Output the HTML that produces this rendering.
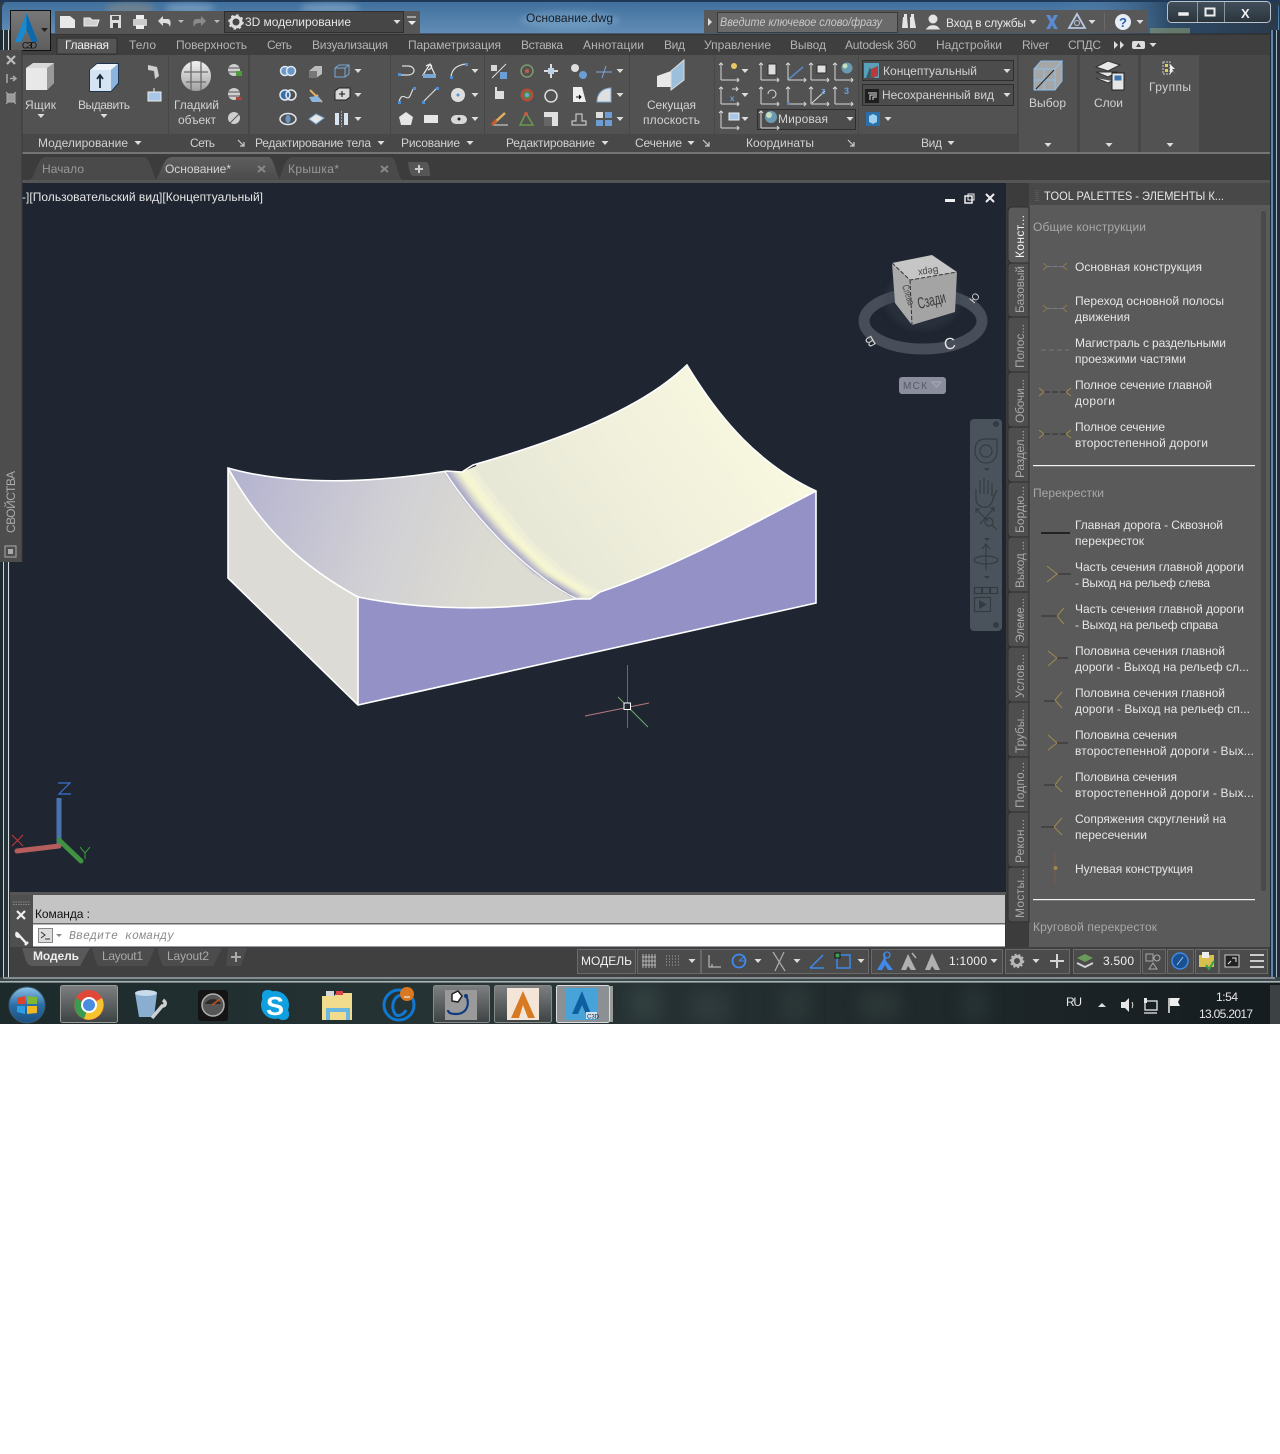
<!DOCTYPE html>
<html lang="ru"><head><meta charset="utf-8"><title>Основание.dwg</title>
<style>
html,body{margin:0;padding:0;background:#fff}
svg{display:block;position:absolute;left:0;top:0}
text{font-family:"Liberation Sans","DejaVu Sans",sans-serif;font-size:12px;fill:#ddd}
.t{fill:#d2d2d2}.w{fill:#f0f0f0}.d{fill:#b4b4b4}.g{fill:#a8a8a8}.l{fill:#e6e6e6}.k{fill:#111}
.s{fill:none;stroke:#ddd;stroke-width:1.2}
</style></head><body>
<svg width="1280" height="1454" viewBox="0 0 1280 1454" xmlns="http://www.w3.org/2000/svg">
<defs>
<linearGradient id="tb" x1="0" y1="0" x2="0" y2="1"><stop offset="0" stop-color="#3f6f9d"/><stop offset="1" stop-color="#6590b8"/></linearGradient>
<linearGradient id="tr" x1="0" y1="0" x2="1" y2="0"><stop offset="0" stop-color="#6590b8" stop-opacity="0"/><stop offset=".5" stop-color="#2c4a68"/><stop offset="1" stop-color="#2b3a4a"/></linearGradient>
<linearGradient id="app" x1="0" y1="0" x2="0" y2="1"><stop offset="0" stop-color="#787878"/><stop offset="1" stop-color="#5e5e5e"/></linearGradient>
<linearGradient id="lf" gradientUnits="userSpaceOnUse" x1="240" y1="470" x2="500" y2="560"><stop offset="0" stop-color="#b5b4d0"/><stop offset=".55" stop-color="#d0cfd4"/><stop offset="1" stop-color="#dddcd2"/></linearGradient>
<linearGradient id="rt" gradientUnits="userSpaceOnUse" x1="520" y1="560" x2="740" y2="400"><stop offset="0" stop-color="#e6e6d6"/><stop offset="1" stop-color="#f8f8e0"/></linearGradient>
<linearGradient id="ball" x1="0" y1="0" x2="0" y2="1"><stop offset="0" stop-color="#f2f2f2"/><stop offset="1" stop-color="#a0a0a0"/></linearGradient>
<linearGradient id="orb" x1="0" y1="0" x2="0" y2="1"><stop offset="0" stop-color="#8fc4e8"/><stop offset=".5" stop-color="#2a6ea8"/><stop offset="1" stop-color="#1c4f80"/></linearGradient>
<linearGradient id="bar" x1="0" y1="0" x2="1" y2="0"><stop offset="0" stop-color="#1d2a2c"/><stop offset=".4" stop-color="#283536"/><stop offset=".7" stop-color="#20292b"/><stop offset="1" stop-color="#151c20"/></linearGradient>
<linearGradient id="btn" x1="0" y1="0" x2="0" y2="1"><stop offset="0" stop-color="#7d8080"/><stop offset="1" stop-color="#3d4243"/></linearGradient>
<linearGradient id="tabg" x1="0" y1="0" x2="0" y2="1"><stop offset="0" stop-color="#5e5e5e"/><stop offset="1" stop-color="#4b4b4b"/></linearGradient>
<linearGradient id="wb" x1="0" y1="0" x2="0" y2="1"><stop offset="0" stop-color="#42505c"/><stop offset="1" stop-color="#2a343c"/></linearGradient>
<filter id="b3"><feGaussianBlur stdDeviation="3"/></filter>
<filter id="b8"><feGaussianBlur stdDeviation="8"/></filter>
<filter id="b1" x="-5%" y="-5%" width="110%" height="110%"><feGaussianBlur stdDeviation="1"/></filter>
<clipPath id="tbclip"><rect y="983" width="1280" height="41"/></clipPath>
<g id="ar"><path d="M-3.5-2H3.500L0 2Z" fill="#ddd"/></g>
<g id="ucs" fill="none" stroke="#d8d8d8" stroke-width="1"><path d="M-9 9V-8M-9 9H9M-11-6-9-8-7-6M7 7 9 9 7 11"/></g>
<g id="cor"><path d="M-3-3 3 3M3-1V3H-1" fill="none" stroke="#ccc" stroke-width="1.200"/></g>
<g id="rd"><path d="M-16-4-11 0-16 4" fill="none" stroke="#a08a4a"/><path d="M16-4 11 0 16 4" fill="none" stroke="#a08a4a"/><path d="M-11 0H11" stroke="#3a3a3a" stroke-width="1.200" stroke-dasharray="6 2"/></g>
</defs>

<!-- base -->
<rect width="1280" height="1024" fill="#2d3a44"/>
<rect y="1024" width="1280" height="430" fill="#fff"/>
<!-- titlebar -->
<rect x="2" y="1" width="1277" height="36" rx="7" fill="url(#tb)"/>
<rect y="0" width="1280" height="2" fill="#1f3a58"/>
<rect x="1060" y="2" width="218" height="32" fill="url(#tr)"/>
<rect x="1150" y="28" width="40" height="6" fill="#8a9a70" opacity=".6"/>
<g filter="url(#b3)" opacity=".3"><ellipse cx="130" cy="8" rx="25" ry="5" fill="#d0a060"/><ellipse cx="190" cy="8" rx="25" ry="5" fill="#cfe2f0"/><ellipse cx="330" cy="8" rx="30" ry="5" fill="#cfe2f0"/><ellipse cx="570" cy="20" rx="50" ry="9" fill="#9fc4e0"/></g>
<text x="526" y="22" class="k" textLength="87" lengthAdjust="spacingAndGlyphs" style="fill:#16202a">Основание.dwg</text>

<!-- search bar -->
<rect x="704" y="10" width="444" height="23" fill="#585858"/>
<path d="M708 18 712 22 708 26Z" fill="#ddd"/>
<rect x="717.500" y="12.500" width="180" height="20" fill="#6a6a6a" stroke="#3a3a3a"/>
<text x="720" y="26" style="font-style:italic;font-size:11.500px;fill:#c8c8c8" textLength="162" lengthAdjust="spacingAndGlyphs">Введите ключевое слово/фразу</text>
<path d="M903 17H907L908 28H902ZM910 17H914L916 28H910Z" fill="#e4e4e4"/><rect x="904" y="14" width="3" height="3" fill="#e4e4e4"/><rect x="911" y="14" width="3" height="3" fill="#e4e4e4"/>
<circle cx="933" cy="19" r="4.500" fill="#e4e4e4"/><path d="M927 29C927 24 939 24 939 29Z" fill="#e4e4e4"/><path d="M926 29H940" stroke="#ddd"/>
<text x="946" y="27" class="l" textLength="80">Вход в службы</text><use href="#ar" x="1033" y="22"/>
<path d="M1046 15H1050L1052 19 1054 15H1058L1054 22 1058 29H1054L1052 25 1050 29H1046L1050 22Z" fill="#5a8ad0"/>
<path d="M1077 14 1085 28H1069Z" fill="none" stroke="#b8c8e0" stroke-width="1.800"/><circle cx="1077" cy="23" r="2.500" fill="none" stroke="#b8c8e0"/>
<use href="#ar" x="1092" y="22"/>
<path d="M1104.500 13V31" stroke="#6a6a6a"/>
<circle cx="1123" cy="22" r="8" fill="#e8eef6"/><text x="1119" y="27" style="font-size:13px;font-weight:bold;fill:#2a62b0">?</text>
<use href="#ar" x="1140" y="22"/>

<!-- window buttons -->
<rect x="1167.500" y="1.500" width="103" height="21" rx="4" fill="url(#wb)" stroke="#b8c2c8"/>
<path d="M1197.500 2V22M1224.500 2V22" stroke="#8a969e"/>
<rect x="1178" y="12" width="11" height="4" fill="#eee" stroke="#333" stroke-width=".5"/>
<rect x="1205.500" y="8.500" width="9" height="7" fill="none" stroke="#eee" stroke-width="2"/>
<text x="1241" y="18" style="font-size:13px;font-weight:bold;fill:#f0f0f0">X</text>

<!-- window frame -->
<rect x="0" y="30" width="3" height="955" fill="#1e2a30"/>
<rect x="3" y="30" width="7" height="950" fill="#27333a"/>
<rect x="3" y="30" width="1" height="950" fill="#c9d2d8"/>
<rect x="8" y="30" width="1" height="950" fill="#d8dde0"/>
<rect x="1270" y="30" width="10" height="950" fill="#202c38"/>
<rect x="1271" y="30" width="2" height="950" fill="#5a86b0"/>
<rect x="1276" y="30" width="1" height="950" fill="#aab8c4"/>
<rect x="0" y="977" width="1280" height="6" fill="#3b4748"/>
<rect x="3" y="977.500" width="1272" height="1" fill="#c8d0d4"/>
<rect x="0" y="981" width="1280" height="1.500" fill="#aab4b6"/>

<!-- tab row -->
<rect x="10" y="34" width="1260" height="21" fill="#3f3f3f"/>
<rect x="10" y="33.500" width="1260" height="1" fill="#2a2a2a"/>
<path d="M57 54V38H117V54Z" fill="#545454" stroke="#2e2e2e"/>
<g class="tabs">
<text x="65" y="49" class="w" textLength="44">Главная</text>
<text x="129" y="49" class="d" textLength="27">Тело</text>
<text x="176" y="49" class="d" textLength="71">Поверхность</text>
<text x="267" y="49" class="d" textLength="25">Сеть</text>
<text x="312" y="49" class="d" textLength="76">Визуализация</text>
<text x="408" y="49" class="d" textLength="93">Параметризация</text>
<text x="521" y="49" class="d" textLength="42">Вставка</text>
<text x="583" y="49" class="d" textLength="61">Аннотации</text>
<text x="664" y="49" class="d" textLength="21">Вид</text>
<text x="704" y="49" class="d" textLength="67">Управление</text>
<text x="790" y="49" class="d" textLength="36">Вывод</text>
<text x="845" y="49" class="d" textLength="71">Autodesk 360</text>
<text x="936" y="49" class="d" textLength="66">Надстройки</text>
<text x="1022" y="49" class="d" textLength="27">River</text>
<text x="1068" y="49" class="d" textLength="33">СПДС</text>
</g>
<path d="M1114 41 1118 45 1114 49ZM1120 41 1124 45 1120 49Z" fill="#ddd"/>
<rect x="1132" y="41" width="13" height="8" rx="2" fill="#ddd"/><path d="M1136 47 1138.500 43 1141 47Z" fill="#444"/>
<use href="#ar" x="1153" y="45"/>

<!-- ribbon -->
<rect x="10" y="55" width="1260" height="98" fill="#474747"/>
<g fill="#525252">
<rect x="22" y="55" width="146" height="97"/><rect x="169" y="55" width="79" height="97"/><rect x="250" y="55" width="140" height="97"/><rect x="391" y="55" width="93" height="97"/><rect x="485" y="55" width="144" height="97"/><rect x="630" y="55" width="84" height="97"/><rect x="715" y="55" width="143" height="97"/><rect x="859" y="55" width="158" height="97"/><rect x="1019" y="55" width="58" height="97"/><rect x="1080" y="55" width="58" height="97"/><rect x="1141" y="55" width="58" height="97"/>
</g>
<g fill="#484848"><rect x="22" y="134" width="146" height="18"/><rect x="169" y="134" width="79" height="18"/><rect x="250" y="134" width="140" height="18"/><rect x="391" y="134" width="93" height="18"/><rect x="485" y="134" width="144" height="18"/><rect x="630" y="134" width="84" height="18"/><rect x="715" y="134" width="143" height="18"/><rect x="859" y="134" width="158" height="18"/></g>
<rect x="10" y="152" width="1260" height="2" fill="#757575"/>

<!-- ribbon text -->
<text x="25" y="109" class="t" textLength="31">Ящик</text>
<text x="78" y="109" class="t" textLength="52">Выдавить</text>
<text x="174" y="109" class="t" textLength="45">Гладкий</text>
<text x="178" y="124" class="t" textLength="38">объект</text>
<text x="647" y="109" class="t" textLength="49">Секущая</text>
<text x="643" y="124" class="t" textLength="57">плоскость</text>
<text x="1029" y="107" class="t" textLength="37">Выбор</text>
<text x="1094" y="107" class="t" textLength="29">Слои</text>
<text x="1149" y="91" class="t" textLength="42">Группы</text>
<text x="38" y="147" class="t" textLength="90">Моделирование</text>
<text x="190" y="147" class="t" textLength="25">Сеть</text>
<text x="255" y="147" class="t" textLength="116">Редактирование тела</text>
<text x="401" y="147" class="t" textLength="59">Рисование</text>
<text x="506" y="147" class="t" textLength="89">Редактирование</text>
<text x="635" y="147" class="t" textLength="47">Сечение</text>
<text x="746" y="147" class="t" textLength="68">Координаты</text>
<text x="921" y="147" class="t" textLength="21">Вид</text>
<use href="#ar" x="138" y="143"/><use href="#ar" x="381" y="143"/><use href="#ar" x="470" y="143"/><use href="#ar" x="605" y="143"/><use href="#ar" x="691" y="143"/><use href="#ar" x="951" y="143"/>
<use href="#cor" x="241" y="143"/><use href="#cor" x="706" y="143"/><use href="#cor" x="851" y="143"/>
<g><use href="#ar" x="41" y="116"/><use href="#ar" x="104" y="116"/><use href="#ar" x="1048" y="145"/><use href="#ar" x="1109" y="145"/><use href="#ar" x="1170" y="145"/></g>

<!-- ribbon big icons -->
<path d="M26 68 33 63H54V83L47 90H26Z" fill="#d8d8d8"/><path d="M26 68H47V90H26Z" fill="#e8e8e8"/><path d="M47 68 54 63V83L47 90Z" fill="#9a9a9a"/>
<path d="M89 70 97 63H119V84L111 92H89Z" fill="#1d3550"/><path d="M90 70H111V91H90Z" fill="#d5e4f2"/><path d="M111 70 118 64V83L111 91Z" fill="#8cb4dc"/><path d="M90 70 97 64H118L111 70Z" fill="#eef4fa"/><path d="M100 88V76M97 79 100 75 103 79" stroke="#1a2a3a" stroke-width="1.800" fill="none"/>
<path d="M148 65 157 67 159 76 155 79 154 71 148 70Z" fill="#cfcfcf"/>
<path d="M148 92V101H161V92ZM154 92 148 92M154 88V92" fill="#a8c6e6" stroke="#eee"/>
<circle cx="196" cy="76" r="15" fill="url(#ball)"/><path d="M184 72H208M186 82H206M191 62V90M201 62V90" stroke="#6a6a6a" stroke-width="1.300" fill="none"/>
<g fill="#cfcfcf"><circle cx="234" cy="70" r="6"/><circle cx="234" cy="94" r="6"/><circle cx="234" cy="118" r="6"/></g>
<path d="M228 68H240M228 72H240M228 92H240M228 96H240M229 124 240 113" stroke="#555"/><rect x="236" y="71" width="6" height="5" fill="#4c9a3c"/><rect x="236" y="97" width="6" height="3" fill="#a8443c"/>
<!-- section -->
<path d="M657 76 671 71 671 87 657 87Z" fill="#e8e8e8"/><path d="M671 71 684 60V80L671 90Z" fill="#9cc0dc" stroke="#ddd"/>
<!-- Select / layers / groups -->
<path d="M1034 69 1041 61H1062V81L1055 90H1034Z" fill="#bcbcbc" opacity=".8"/><path d="M1034 69H1055V90H1034ZM1055 69 1062 61V81L1055 90M1034 69 1041 61H1062M1034 80H1055M1044 69V90" fill="none" stroke="#8fc0ec"/><path d="M1036 89 1054 70" stroke="#222"/>
<path d="M1096 67 1108 61 1120 65 1108 71ZM1096 72 1108 77 1118 72ZM1096 78 1108 83 1112 81" fill="#e8e8e8" stroke="#333"/><rect x="1112" y="73" width="12" height="17" fill="#e6e6e6" stroke="#222"/><rect x="1114.500" y="75.500" width="7" height="5" fill="#3c74b0"/>
<rect x="1163" y="62" width="7" height="12" fill="none" stroke="#ccc" stroke-dasharray="2 1"/><rect x="1165" y="64" width="3" height="3" fill="#d8d060"/><rect x="1165" y="69" width="3" height="3" fill="#d8d060"/><path d="M1170 64V74L1173 71 1176 75 1172 69H1175Z" fill="#eee"/>

<!-- Small icons: solid edit -->
<g>
<g fill="none" stroke="#dfe8f2" stroke-width="1.500"><circle cx="285" cy="71" r="4.500" fill="#6a96c8"/><circle cx="291" cy="71" r="4.500" fill="#6a96c8"/><circle cx="285" cy="95" r="5" fill="#3a6ea8"/><circle cx="291" cy="95" r="5"/><ellipse cx="288" cy="119" rx="8" ry="5.500"/></g><ellipse cx="288" cy="119" rx="2.500" ry="4" fill="#6a96c8"/>
<path d="M309 71 315 66H322V74L316 78H309Z" fill="#bcbcbc"/><rect x="309" y="71" width="8" height="7" fill="#777"/>
<path d="M310 90 322 102M311 100 318 95" stroke="#e0b060" stroke-width="2"/><path d="M309 97 318 96 322 102H312Z" fill="#8cb4dc"/>
<path d="M309 119 316 114 324 118 316 124Z" fill="#e8e8e8" stroke="#7aa8d4"/>
<path d="M335 68 339 65H349V74L345 77H335ZM335 68H345V77M345 68 349 65" fill="none" stroke="#7aa8d4"/>
<path d="M335 91 339 88H350V97L346 100H335Z" fill="#d8d8d8" stroke="#222"/><path d="M339 94H345M342 91V97" stroke="#111"/>
<path d="M335 113H339V125H335ZM344 113H348V125H344Z" fill="#d8e4f0"/><path d="M341.500 111V127" stroke="#7aa8d4" stroke-dasharray="2 1"/>
<use href="#ar" x="358" y="71"/><use href="#ar" x="358" y="95"/><use href="#ar" x="358" y="119"/>
</g>
<!-- Draw -->
<g fill="none" stroke="#dcdcdc" stroke-width="1.200">
<path d="M399 75H408C416 75 416 66 408 66H402"/><path d="M423 75 430 64 435 75ZM426 66C432 62 434 68 428 70" stroke="#eee"/>
<path d="M451 77C452 68 458 65 466 64"/><path d="M399 102C402 90 407 102 410 96 412 92 412 90 414 88"/><path d="M423 102 437 88"/>
</g>
<path d="M423 74H436V78H423Z" fill="#7aa8d4"/>
<g fill="#4f8fd8"><rect x="398" y="73" width="3" height="3"/><rect x="450" y="76" width="3" height="3"/><rect x="465" y="63" width="3" height="3"/><rect x="398" y="101" width="3" height="3"/><rect x="413" y="87" width="3" height="3"/><rect x="422" y="101" width="3" height="3"/><rect x="436" y="87" width="3" height="3"/></g>
<circle cx="458" cy="95" r="7" fill="#dedede"/><circle cx="458" cy="95" r="1.500" fill="#4f8fd8"/>
<path d="M406 112 413 117 411 125H401L399 117Z" fill="#e6e6e6"/>
<rect x="424" y="115" width="14" height="8" fill="#e6e6e6"/><rect x="451" y="115" width="16" height="9" rx="5" fill="#d8d8d8"/><circle cx="459" cy="119" r="1.500" fill="#222"/>
<use href="#ar" x="475" y="71"/><use href="#ar" x="475" y="95"/><use href="#ar" x="475" y="119"/>
<!-- Edit -->
<g>
<path d="M492 78 506 64" stroke="#ddd"/><rect x="491" y="65" width="6" height="6" fill="#d8d8d8"/><rect x="500" y="72" width="7" height="7" fill="#6a9ed4"/>
<circle cx="527" cy="71" r="6" fill="none" stroke="#7f9a6a" stroke-width="1.500"/><circle cx="527" cy="71" r="2" fill="#c45a4a"/>
<path d="M551 64V78M544 71H558" stroke="#ddd" stroke-width="2"/><rect x="548" y="68" width="6" height="6" fill="#bcd2e8"/>
<circle cx="575" cy="68" r="4" fill="#dedede"/><circle cx="583" cy="75" r="4" fill="#6a9ed4"/>
<path d="M596 72H612M606 66 602 78" stroke="#7aa8d4"/><use href="#ar" x="620" y="71"/>
<rect x="495" y="91" width="9" height="8" fill="#dedede"/><path d="M496 91V87" stroke="#ddd" stroke-width="2"/>
<circle cx="527" cy="95" r="6.500" fill="#b84a3a"/><circle cx="527" cy="95" r="4" fill="#4a8a50"/><circle cx="527" cy="95" r="2" fill="#7aa8d4"/>
<circle cx="551" cy="96" r="6" fill="none" stroke="#ddd" stroke-width="1.500"/>
<path d="M573 87H582L586 102H573Z" fill="#eee"/><path d="M576 97H581M579 95 581 97 579 99" stroke="#111"/>
<path d="M597 102C597 93 603 88 611 88V102Z" fill="#e0e0e0" stroke="#7aa8d4"/><use href="#ar" x="620" y="95"/>
<path d="M492 125H508" stroke="#ddd"/><path d="M493 124 505 113" stroke="#e0b060" stroke-width="2.500"/><path d="M492 125 496 120" stroke="#c45a2a" stroke-width="3"/>
<path d="M526 113 520 125H533Z" fill="none" stroke="#6a9a4a" stroke-width="1.500"/><circle cx="526" cy="114" r="2" fill="#c45a4a"/>
<rect x="544" y="112" width="14" height="14" fill="#e0e0e0"/><rect x="544" y="117" width="8" height="9" fill="#666"/>
<path d="M572 125H586V121H582V114H576V121H572Z" fill="none" stroke="#ddd"/>
<g fill="#6a9ed4"><rect x="596" y="112" width="7" height="6" fill="#dedede"/><rect x="605" y="112" width="7" height="6"/><rect x="596" y="120" width="7" height="6"/><rect x="605" y="120" width="7" height="6"/></g><use href="#ar" x="620" y="119"/>
</g>
<!-- Coordinates -->
<use href="#ucs" x="730" y="71"/><circle cx="734" cy="66" r="3" fill="#e8c860"/>
<use href="#ucs" x="730" y="95"/><path d="M732 89H737M736 87 738 89 736 91" stroke="#ddd" fill="none"/><text x="730" y="101" style="font-size:8px;fill:#6aa0e0;font-weight:bold">x</text>
<use href="#ucs" x="730" y="119"/><rect x="729" y="113" width="10" height="7" fill="#a8c6e6" stroke="#eee"/>
<use href="#ar" x="745" y="71"/><use href="#ar" x="745" y="95"/><use href="#ar" x="745" y="119"/>
<use href="#ucs" x="770" y="71"/><rect x="768" y="64" width="8" height="11" fill="#ddd" stroke="#333"/>
<use href="#ucs" x="770" y="95"/><path d="M768 94A4 4 0 1 1 772 98" fill="none" stroke="#ddd"/>
<use href="#ucs" x="797" y="71"/><path d="M789 79 803 67" stroke="#5a88c0" stroke-width="1.500"/>
<use href="#ucs" x="797" y="95"/><rect x="787" y="102" width="3" height="3" fill="#5a88c0"/>
<use href="#ucs" x="820" y="71"/><rect x="817" y="65" width="9" height="8" fill="#e0e0e0" stroke="#333"/>
<use href="#ucs" x="820" y="95"/><path d="M812 103 825 91" stroke="#ddd"/><text x="821" y="94" style="font-size:9px;font-weight:bold;fill:#6aa0e0">z</text>
<use href="#ucs" x="844" y="71"/><circle cx="847" cy="68" r="5.500" fill="#6a9ab0"/><circle cx="845" cy="66" r="2.500" fill="#c0e0c0"/>
<use href="#ucs" x="844" y="95"/><text x="844" y="94" style="font-size:9px;font-weight:bold;fill:#6aa0e0">3</text>
<!-- combos -->
<rect x="757.500" y="109.500" width="98" height="20" fill="#4c4c4c" stroke="#2e2e2e"/>
<use href="#ucs" x="770" y="119"/><circle cx="771" cy="117" r="6" fill="#6a9ab0"/><circle cx="769" cy="115" r="3" fill="#c0e0c0"/>
<text x="778" y="123" class="t" textLength="50">Мировая</text><use href="#ar" x="850" y="119"/>
<rect x="862.500" y="60.500" width="151" height="20" fill="#4c4c4c" stroke="#2e2e2e"/>
<rect x="864" y="63" width="15" height="15" fill="#5aa0b8"/><path d="M866 78 870 67 874 78Z" fill="#3a5a6a"/><path d="M871 78V69L878 66V76Z" fill="#b83a3a"/>
<text x="883" y="75" class="t" textLength="94">Концептуальный</text><use href="#ar" x="1007" y="71"/>
<rect x="862.500" y="84.500" width="151" height="21" fill="#4c4c4c" stroke="#2e2e2e"/>
<rect x="865" y="89" width="14" height="14" fill="#1f1f1f"/><path d="M868 93H877M870 100V95H877M873 100V97H877" stroke="#ddd" fill="none"/>
<text x="882" y="99" class="t" textLength="112">Несохраненный вид</text><use href="#ar" x="1007" y="95"/>
<rect x="866" y="112" width="14" height="14" fill="#2c6ea8"/><path d="M869 116 873 114 877 116V122L873 124 869 122Z" fill="#9cd0f0"/><use href="#ar" x="888" y="119"/>

<!-- QAT -->
<rect x="55" y="11" width="365" height="23" fill="#565656"/>
<path d="M60 16H70L75 20V28H60Z" fill="#e8e8e8"/>
<path d="M84 26V18H90L92 20H99L97 26Z" fill="#d0d0d0" stroke="#eee"/>
<path d="M110 15H121V28H110Z" fill="#ddd"/><rect x="112" y="16" width="7" height="4" fill="#555"/><rect x="113" y="23" width="5" height="5" fill="#444"/>
<rect x="133" y="19" width="14" height="7" rx="1" fill="#ccc"/><rect x="136" y="15" width="8" height="4" fill="#eee"/><rect x="136" y="25" width="8" height="4" fill="#eee"/>
<path d="M158 21 163 16V19H168C171 19 171 24 170 27 169 24 168 23 163 23V26Z" fill="#ddd"/><path d="M178 20H184L181 23Z" fill="#bbb"/>
<path d="M206 21 201 16V19H196C193 19 193 24 194 27 195 24 196 23 201 23V26Z" fill="#8a8a8a"/><path d="M214 20H220L217 23Z" fill="#bbb"/>
<rect x="224.500" y="11.500" width="179" height="21" fill="#464646" stroke="#2f2f2f"/>
<circle cx="236" cy="22" r="5" fill="none" stroke="#ddd" stroke-width="3"/><circle cx="236" cy="22" r="7" fill="none" stroke="#ddd" stroke-width="1.500" stroke-dasharray="2.500 3"/>
<text x="245" y="26" class="l" textLength="106">3D моделирование</text><use href="#ar" x="397" y="22"/>
<path d="M407 17H416" stroke="#eee"/><path d="M408 21H416L412 25Z" fill="#eee"/>

<!-- app button -->
<rect x="10.500" y="10.500" width="40" height="40" fill="url(#app)" stroke="#111"/>
<path d="M26.500 13 38 42H32L26.500 30 21 42H15Z" fill="#1a8ad0"/><path d="M26.500 13 38 42H32L26.500 30Z" fill="#0d68ac"/>
<path d="M41 28H48L44.500 32Z" fill="#222"/>
<text x="22" y="48.500" class="k" style="font-size:9px" textLength="15">C3D</text>

<!-- doc tabs -->
<rect x="10" y="154" width="1260" height="26" fill="#3c3c3c"/>
<rect x="10" y="180" width="1260" height="3" fill="#555"/>
<path d="M30 180C36 176 37 157 46 157H143C150 157 152 172 156 180Z" fill="#4a4a4a"/>
<path d="M155 180C161 176 162 157 172 157H268C274 157 275 172 280 180Z" fill="url(#tabg)"/>
<path d="M279 180C282 174 284 157 293 157H390C397 157 396 172 402 180Z" fill="#4a4a4a"/>
<path d="M408 162H426C430 162 430 176 430 176H414C410 176 409 170 408 162Z" fill="#565656"/>
<path d="M419 165V173M415 169H423" stroke="#ccc" stroke-width="2"/>
<text x="42" y="173" class="g" style="fill:#999" textLength="42">Начало</text>
<text x="165" y="173" class="t" textLength="66">Основание*</text>
<text x="288" y="173" class="g" style="fill:#999" textLength="51">Крышка*</text>
<path d="M258 166 265 172M265 166 258 172M381 166 388 172M388 166 381 172" stroke="#888" stroke-width="2"/>

<!-- viewport -->
<rect x="10" y="183" width="996" height="711" fill="#1f2631"/>
<text x="22" y="201" class="l" textLength="241">-][Пользовательский вид][Концептуальный]</text>
<rect x="945" y="199" width="10" height="3" fill="#eee"/>
<rect x="965" y="196" width="7" height="7" fill="none" stroke="#eee" stroke-width="1.500"/><rect x="968" y="194" width="6" height="6" fill="none" stroke="#eee"/>
<path d="M986 194 994 202M994 194 986 202" stroke="#eee" stroke-width="2"/>

<!-- 3D shape -->
<path d="M228 468C262 530 305 568 358 597V705L228 578Z" fill="#dcdbd6"/>
<path d="M358 597C420 610 500 612 575 599H590L600 592C680 565 750 525 816 491V603L358 705Z" fill="#9391c5"/>
<path d="M228 468C270 480 340 488 447 471L462 472C480 520 530 575 577 600C500 612 420 610 358 597C305 568 262 530 228 468Z" fill="url(#lf)"/>
<path d="M462 472 473 466 470 465C560 440 640 410 687 365C720 420 760 465 816 491C750 525 680 565 600 592L590 599C540 575 490 520 462 472Z" fill="url(#rt)"/>
<path d="M570 596 600 591 590 599H575Z" fill="#e6e6d2"/>
<!-- fillet strips -->
<g stroke-width=".8" stroke-linejoin="round" filter="url(#b1)">
<path d="M445 472 467 503 493 533 533 572 575 598 578 597.300 537.100 572.100 497.800 534.200 471 503 448.400 471.400Z" fill="#a9a8c8" stroke="#a9a8c8"/>
<path d="M448.400 471.400 471 503 497.800 534.200 537.100 572.100 578 597.300 581 596.600 541.200 572.200 502.600 535.400 474.900 503 451.700 470.800Z" fill="#bbbacb" stroke="#bbbacb"/>
<path d="M451.700 470.800 474.900 503 502.600 535.400 541.200 572.200 581 596.600 584 595.800 545.200 572.400 507.400 536.600 478.900 503 455.100 470.200Z" fill="#d6d5ce" stroke="#d6d5ce"/>
<path d="M455.100 470.200 478.900 503 507.400 536.600 545.200 572.400 584 595.800 587 595.100 549.300 572.500 512.200 537.800 482.800 503 458.400 469.600Z" fill="#ecebcf" stroke="#ecebcf"/>
<path d="M458.400 469.600 482.800 503 512.200 537.800 549.300 572.500 587 595.100 590 594.400 553.400 572.600 517 539 486.800 503 461.800 469Z" fill="#f7f7d1" stroke="#f7f7d1"/>
<path d="M461.800 469 486.800 503 517 539 553.400 572.600 590 594.400 595 593.200 560.200 572.800 525 541 493.400 503 467.400 468Z" fill="#f4f4d4" stroke="#f4f4d4"/>
<path d="M467.400 468 493.400 503 525 541 560.200 572.800 595 593.200 600 592 567 573 533 543 500 503 473 467Z" fill="#eeeed8" stroke="#eeeed8"/>
</g>
<path d="M358 597C420 610 500 612 575 599H590L600 592 640 578 600 620 400 640Z" fill="#9391c5"/>
<path d="M430 455 462 462 480 455 476 466 462 472 447 471Z" fill="#1f2631"/>
<g fill="none" stroke="#fff" stroke-width="1.600">
<path d="M228 468C270 480 340 488 447 471L462 472 473 465C560 440 640 410 687 365C720 420 760 465 816 491V603L358 705 228 578ZM358 705V597"/>
<path d="M228 468C262 530 305 568 358 597C420 610 500 612 575 599H590L600 592C680 565 750 525 816 491"/>
<path d="M445 472C480 525 530 575 577 599" stroke-width="1.200"/>
</g>

<!-- crosshair -->
<path d="M627.500 665V728" stroke="#5a5ec8"/>
<path d="M585 716 649 703" stroke="#b87a82"/>
<path d="M618 697 648 727" stroke="#6aa86a"/>
<rect x="624" y="703" width="6.500" height="6.500" fill="#1f2631" stroke="#fff"/>

<!-- UCS -->
<path d="M59 846V798" stroke="#4a73ac" stroke-width="5"/><path d="M59 846 17 851" stroke="#b65d5d" stroke-width="5" stroke-linecap="round"/><path d="M59 840 81 861" stroke="#3f9340" stroke-width="5" stroke-linecap="round"/>
<path d="M58 783H70L59 794H71" fill="none" stroke="#3a72d0" stroke-width="1.200"/>
<path d="M12 835 23 846M23 835 12 846" stroke="#c23a3a"/>
<path d="M80 847 85 853 90 847M85 853V859" stroke="#3a9a3a" fill="none"/>

<!-- viewcube -->
<ellipse cx="923" cy="321" rx="59" ry="28" fill="none" stroke="#474e59" stroke-width="11"/>
<ellipse cx="923" cy="300" rx="38" ry="30" fill="#3a424d" opacity=".35" filter="url(#b3)"/>
<path d="M892 263 932 255 957 272 910 280Z" fill="#c6c6c6"/><path d="M892 263 910 280 912 325 895 303Z" fill="#aaa"/><path d="M910 280 957 272 955 312 912 325Z" fill="#a4a4a4"/>
<path d="M892 263 910 280 957 272M910 280 912 325" fill="none" stroke="#333" stroke-dasharray="4 2"/>
<text transform="translate(938 267) rotate(172) scale(.9 1)" style="font-size:10px;fill:#444">Верх</text>
<text transform="translate(919 309) rotate(-14) scale(.62 1)" style="font-size:16px;fill:#3a3a3a">Сзади</text>
<text transform="translate(902 286) rotate(72) scale(.7 1)" style="font-size:10px;fill:#444">Слева</text>
<text transform="translate(872 335) rotate(150)" style="font-size:14px;fill:#d0d0d0">В</text>
<text transform="translate(974 304) rotate(-50)" style="font-size:10px;fill:#d0d0d0">Ю</text>
<text transform="translate(945 350) rotate(-10)" style="font-size:16px;fill:#e4e4e4">С</text>
<rect x="899" y="377" width="47" height="17" rx="3" fill="#8b8e9c"/>
<text x="903" y="389" style="font-size:10px;fill:#565a68" textLength="24">МСК</text>
<path d="M932 382H941L936.500 387Z" fill="none" stroke="#a8acb8"/>

<!-- navbar -->
<rect x="970" y="419" width="32" height="212" rx="4" fill="#4a535b"/>
<g fill="none" stroke="#333b42" stroke-width="1.200">
<path d="M986 439C976 439 975 446 975 451 975 458 980 463 986 463 993 463 997 458 997 451V439Z"/><circle cx="986" cy="451" r="6"/>
<path d="M976 500V489M980 494V480M984 494V478M988 494V480M992 496V483M976 500C978 510 992 510 993 498L997 490"/>
<path d="M976 509 988 521M994 508 980 524M976 513V509H980M994 512V508H990"/><circle cx="989" cy="522" r="4"/><path d="M992 525 997 530"/>
<path d="M986 545V570M982 549 986 544 990 549"/><ellipse cx="986" cy="560" rx="12" ry="4"/>
<rect x="974.500" y="587.500" width="7" height="6"/><rect x="982.500" y="587.500" width="7" height="6"/><rect x="990.500" y="587.500" width="7" height="6"/><rect x="974.500" y="597.500" width="16" height="14"/>
</g>
<path d="M979 600 987 604.500 979 609Z" fill="#333b42"/>
<g fill="#333b42"><path d="M984 468H990L987 471ZM984 538H990L987 541ZM984 576H990L987 579Z"/><circle cx="996" cy="424" r="3"/><circle cx="996" cy="625" r="3"/></g>

<!-- left palette -->
<rect x="0" y="50" width="22" height="512" fill="#4d4d4d"/><rect x="21.500" y="50" width="1" height="512" fill="#3a3a3a"/>
<path d="M7 56 15 64M15 56 7 64" stroke="#bbb" stroke-width="2.200"/>
<path d="M7 74V83M10 78.500H15M13 76 16 78.500 13 81" stroke="#aaa" fill="none" stroke-width="1.500"/>
<path d="M7 94H15V102H7Z M6 92 9 95M16 92 13 95M6 104 9 101M16 104 13 101" fill="#9a9a9a" stroke="#aaa"/>
<text transform="translate(15 533) rotate(-90)" class="g" style="fill:#aaa;font-size:12px" textLength="62">СВОЙСТВА</text>
<rect x="5" y="546" width="11" height="11" fill="none" stroke="#aaa"/><rect x="8" y="549" width="5" height="5" fill="#aaa"/>

<!-- palette -->
<rect x="1006" y="183" width="264" height="764" fill="#3c3c3c"/>
<rect x="1029" y="183" width="241" height="22" fill="#484848"/>
<rect x="1029" y="205" width="241" height="742" fill="#5a5a5a"/>
<path d="M1036 190V201M1038 190V201" stroke="#666" stroke-dasharray="1 1"/>
<text x="1044" y="200" class="l" textLength="180" lengthAdjust="spacingAndGlyphs">TOOL PALETTES - ЭЛЕМЕНТЫ К...</text>
<rect x="1261" y="211" width="5" height="680" rx="2" fill="#4a4a4a"/>

<!-- palette tabs -->
<g fill="#4e4e4e" stroke="#2f2f2f">
<path d="M1029 263H1013Q1008 263 1008 258V212Q1008 207 1013 207H1029Z" fill="#5a5a5a"/>
<path d="M1029 317H1012Q1008 317 1008 313V267Q1008 263 1012 263H1029Z"/>
<path d="M1029 372H1012Q1008 372 1008 368V321Q1008 317 1012 317H1029Z"/>
<path d="M1029 427H1012Q1008 427 1008 423V376Q1008 372 1012 372H1029Z"/>
<path d="M1029 482H1012Q1008 482 1008 478V431Q1008 427 1012 427H1029Z"/>
<path d="M1029 537H1012Q1008 537 1008 533V486Q1008 482 1012 482H1029Z"/>
<path d="M1029 592H1012Q1008 592 1008 588V541Q1008 537 1012 537H1029Z"/>
<path d="M1029 647H1012Q1008 647 1008 643V596Q1008 592 1012 592H1029Z"/>
<path d="M1029 702H1012Q1008 702 1008 698V651Q1008 647 1012 647H1029Z"/>
<path d="M1029 757H1012Q1008 757 1008 753V706Q1008 702 1012 702H1029Z"/>
<path d="M1029 812H1012Q1008 812 1008 808V761Q1008 757 1012 757H1029Z"/>
<path d="M1029 867H1012Q1008 867 1008 863V816Q1008 812 1012 812H1029Z"/>
<path d="M1029 922H1012Q1008 922 1008 918V871Q1008 867 1012 867H1029Z"/>
</g>
<g class="g" style="fill:#aaa">
<text transform="translate(1024 258) rotate(-90)" style="fill:#f4f4f4" textLength="43">Конст...</text>
<text transform="translate(1024 313) rotate(-90)" class="g" textLength="47">Базовый</text>
<text transform="translate(1024 368) rotate(-90)" class="g" textLength="44">Полос...</text>
<text transform="translate(1024 423) rotate(-90)" class="g" textLength="44">Обочи...</text>
<text transform="translate(1024 478) rotate(-90)" class="g" textLength="48">Раздел...</text>
<text transform="translate(1024 533) rotate(-90)" class="g" textLength="47">Бордю...</text>
<text transform="translate(1024 588) rotate(-90)" class="g" textLength="47">Выход ...</text>
<text transform="translate(1024 643) rotate(-90)" class="g" textLength="45">Элеме...</text>
<text transform="translate(1024 698) rotate(-90)" class="g" textLength="44">Услов...</text>
<text transform="translate(1024 753) rotate(-90)" class="g" textLength="44">Трубы...</text>
<text transform="translate(1024 808) rotate(-90)" class="g" textLength="46">Подпо...</text>
<text transform="translate(1024 863) rotate(-90)" class="g" textLength="44">Рекон...</text>
<text transform="translate(1024 918) rotate(-90)" class="g" textLength="49">Мосты...</text>
</g>
<!-- palette list -->
<text x="1033" y="231" class="g" textLength="113">Общие конструкции</text>
<text x="1033" y="497" class="g" textLength="71">Перекрестки</text>
<text x="1033" y="931" class="g" textLength="124">Круговой перекресток</text>
<rect x="1033" y="465" width="222" height="1.200" fill="#f2f2f2"/>
<rect x="1033" y="899" width="222" height="1.200" fill="#f2f2f2"/>
<g>
<text x="1075" y="271" class="l" textLength="127">Основная конструкция</text>
<text x="1075" y="305" class="l" textLength="149">Переход основной полосы</text><text x="1075" y="321" class="l" textLength="55">движения</text>
<text x="1075" y="347" class="l" textLength="151">Магистраль с раздельными</text><text x="1075" y="363" class="l" textLength="111">проезжими частями</text>
<text x="1075" y="389" class="l" textLength="137">Полное сечение главной</text><text x="1075" y="405" class="l" textLength="40">дороги</text>
<text x="1075" y="431" class="l" textLength="90">Полное сечение</text><text x="1075" y="447" class="l" textLength="133">второстепенной дороги</text>
<text x="1075" y="529" class="l" textLength="148">Главная дорога - Сквозной</text><text x="1075" y="545" class="l" textLength="69">перекресток</text>
<text x="1075" y="571" class="l" textLength="169">Часть сечения главной дороги</text><text x="1075" y="587" class="l" textLength="135">- Выход на рельеф слева</text>
<text x="1075" y="613" class="l" textLength="169">Часть сечения главной дороги</text><text x="1075" y="629" class="l" textLength="143">- Выход на рельеф справа</text>
<text x="1075" y="655" class="l" textLength="150">Половина сечения главной</text><text x="1075" y="671" class="l" textLength="174">дороги - Выход на рельеф сл...</text>
<text x="1075" y="697" class="l" textLength="150">Половина сечения главной</text><text x="1075" y="713" class="l" textLength="175">дороги - Выход на рельеф сп...</text>
<text x="1075" y="739" class="l" textLength="102">Половина сечения</text><text x="1075" y="755" class="l" textLength="179">второстепенной дороги - Вых...</text>
<text x="1075" y="781" class="l" textLength="102">Половина сечения</text><text x="1075" y="797" class="l" textLength="179">второстепенной дороги - Вых...</text>
<text x="1075" y="823" class="l" textLength="151">Сопряжения скруглений на</text><text x="1075" y="839" class="l" textLength="72">пересечении</text>
<text x="1075" y="873" class="l" textLength="118">Нулевая конструкция</text>
</g>
<!-- list icons -->
<path d="M1043 263 1047 266.500 1043 270M1067 263 1063 266.500 1067 270" fill="none" stroke="#8a7a4a"/><path d="M1047 266.500H1063" stroke="#777a90" stroke-dasharray="5 1"/>
<path d="M1043 305 1047 308.500 1043 312M1067 305 1063 308.500 1067 312" fill="none" stroke="#8a7a4a"/><path d="M1047 308.500H1063" stroke="#777a90" stroke-dasharray="5 1"/>
<path d="M1041 350H1069" stroke="#777" stroke-dasharray="5 3"/>
<use href="#rd" x="1055" y="392"/><use href="#rd" x="1055" y="434"/>
<path d="M1041 533H1070" stroke="#111" stroke-width="1.500"/>
<path d="M1047 566 1057 574 1047 582M1057 574H1071" fill="none" stroke="#a08a4a"/><path d="M1058 574H1071" stroke="#2e2e2e"/>
<path d="M1064 608 1057 616 1064 624" fill="none" stroke="#a08a4a"/><path d="M1041 616H1057" stroke="#2e2e2e"/>
<path d="M1048 651 1057 658 1048 666" fill="none" stroke="#a08a4a"/><path d="M1057 658H1068" stroke="#2e2e2e"/>
<path d="M1062 692 1055 700 1062 708" fill="none" stroke="#a08a4a"/><path d="M1044 701H1055" stroke="#2e2e2e"/>
<path d="M1048 735 1057 743 1048 750" fill="none" stroke="#a08a4a"/><path d="M1057 743H1068" stroke="#2e2e2e"/>
<path d="M1062 776 1055 785 1062 792" fill="none" stroke="#a08a4a"/><path d="M1044 785H1055" stroke="#2e2e2e"/>
<path d="M1062 818 1054 827 1062 835" fill="none" stroke="#a08a4a"/><path d="M1041 827H1054" stroke="#2e2e2e"/>
<path d="M1055 853V884" stroke="#7a5a4a"/><circle cx="1055.500" cy="868" r="2" fill="#a08a4a"/>

<!-- command line -->
<rect x="10" y="892" width="996" height="3" fill="#555"/>
<rect x="10" y="895" width="23" height="52" fill="#4f4f4f"/>
<rect x="33" y="895" width="972" height="28" fill="#c4c4c4"/>
<rect x="33" y="923" width="972" height="1.500" fill="#6a6a6a"/>
<rect x="33" y="924.500" width="972" height="22" fill="#fff"/>
<path d="M13 902H30M13 904.500H30" stroke="#8a8a8a" stroke-dasharray="1.500 1"/>
<path d="M17 911 25 919M25 911 17 919" stroke="#f0f0f0" stroke-width="2.200"/>
<path d="M17 933 26 943M17 932C15 936 18 938 20 936M25 945 28 942" stroke="#f0f0f0" stroke-width="2.400" fill="none"/>
<text x="35" y="918" style="fill:#111" textLength="55">Команда :</text>
<rect x="38.500" y="928.500" width="14" height="14" fill="#ddd" stroke="#888"/>
<path d="M41 932 45 935 41 938M45 939H50" stroke="#333" fill="none"/><path d="M56 934H62L59 937Z" fill="#888"/>
<text x="69" y="939" style="font-family:'Liberation Mono',monospace;font-style:italic;font-size:11.500px;fill:#8a8a8a" textLength="105">Введите команду</text>

<!-- status bar -->
<rect x="10" y="947" width="1260" height="30" fill="#404040"/>
<path d="M22 948H90L80 966H32C26 966 25 956 22 948Z" fill="#595959"/>
<path d="M92 948H155L147 966H98C95 960 94 955 92 948Z" fill="#4c4c4c"/>
<path d="M157 948H222L213 966H163C160 960 159 955 157 948Z" fill="#4c4c4c"/>
<path d="M228 948H247L241 966H226Z" fill="#4c4c4c"/>
<path d="M236 952V962M231 957H241" stroke="#aaa" stroke-width="2"/>
<text x="33" y="960" style="fill:#eee;font-weight:bold" textLength="46">Модель</text>
<text x="102" y="960" class="g" textLength="41">Layout1</text>
<text x="167" y="960" class="g" textLength="42">Layout2</text>
<g fill="#4b4b4b" stroke="#6a6a6a">
<rect x="577.500" y="949.500" width="58" height="24"/><rect x="637.500" y="949.500" width="63" height="24"/><rect x="701.500" y="949.500" width="167" height="24"/><rect x="871.500" y="949.500" width="131" height="24"/><rect x="1005.500" y="949.500" width="64" height="24"/><rect x="1073.500" y="949.500" width="67" height="24"/><rect x="1142.500" y="949.500" width="23" height="24"/><rect x="1167.500" y="949.500" width="26" height="24"/><rect x="1195.500" y="949.500" width="23" height="24"/><rect x="1219.500" y="949.500" width="48" height="24"/>
</g>
<text x="581" y="965" class="w" textLength="51">МОДЕЛЬ</text>
<path d="M643 954V968M646 954V968M649 954V968M652 954V968M655 954V968M642 957H656M642 961H656M642 965H656" stroke="#ccc" stroke-width=".8"/>
<path d="M666 956H680M666 959H680M666 962H680M666 965H680" stroke="#aaa" stroke-dasharray="1 2"/>
<use href="#ar" x="692" y="961"/>
<path d="M709 955V967H721M712 967V964" fill="none" stroke="#ccc"/>
<circle cx="739" cy="961" r="6.500" fill="none" stroke="#3f8aea" stroke-width="1.800"/><path d="M739 961H746M739 961 745 956" stroke="#3f8aea"/>
<use href="#ar" x="758" y="961"/>
<path d="M773 952 785 971M784 952 775 971" stroke="#a8a8a8" stroke-width="1.300"/><use href="#ar" x="797" y="961"/>
<path d="M810 968 823 955M810 968H824" fill="none" stroke="#3f8aea" stroke-width="1.500"/>
<rect x="837" y="955" width="13" height="13" fill="none" stroke="#3f8aea" stroke-width="1.500"/><rect x="835" y="953" width="5" height="5" fill="#3aa04a" stroke="#111"/>
<use href="#ar" x="861" y="961"/>
<path d="M884 958 877 970H882L885 965 888 970H893Z" fill="#3f8aea"/><circle cx="887" cy="955" r="3" fill="none" stroke="#3f8aea" stroke-width="1.300"/><path d="M884 953 885 962" stroke="#3f8aea" stroke-width="2"/>
<path d="M908 954 901 970H906L908 966 911 970H916Z" fill="#b0b0b0"/><path d="M912 953 916 958" stroke="#b0b0b0" stroke-width="1.500"/>
<path d="M932 953 925 970H930L932 966 935 970H940Z" fill="#b0b0b0"/>
<text x="949" y="965" class="w" textLength="38">1:1000</text><use href="#ar" x="994" y="961"/>
<circle cx="1017" cy="961" r="4.500" fill="none" stroke="#b8b8b8" stroke-width="3"/><circle cx="1017" cy="961" r="6.500" fill="none" stroke="#b8b8b8" stroke-width="1.500" stroke-dasharray="2 2"/>
<use href="#ar" x="1036" y="961"/>
<path d="M1057 954V968M1050 961H1064" stroke="#d4d4d4" stroke-width="2"/>
<path d="M1077 958 1085 954 1093 958 1085 962Z" fill="#6a9a5a"/><path d="M1077 963 1085 967 1093 963" fill="none" stroke="#d0d0d0" stroke-width="2"/>
<text x="1103" y="965" class="w" textLength="31">3.500</text>
<rect x="1146" y="954" width="7" height="7" fill="none" stroke="#aaa"/><path d="M1149 969 1153 963 1157 969Z" fill="none" stroke="#aaa"/><circle cx="1157" cy="958" r="3" fill="none" stroke="#aaa"/>
<circle cx="1180" cy="961" r="8" fill="#1a4f90" stroke="#3f8aea" stroke-width="1.500"/><path d="M1177 965 1183 957" stroke="#9ac4ee"/>
<rect x="1199" y="955" width="15" height="12" fill="#d8c050"/><rect x="1202" y="952" width="7" height="6" fill="#eee"/><path d="M1206 965 1209 969 1214 961" fill="none" stroke="#3aa04a" stroke-width="2"/>
<rect x="1225" y="955" width="14" height="12" fill="#222" stroke="#ccc"/><path d="M1228 964 1231 961M1232 958 1236 958 1236 962" stroke="#eee" fill="none"/>
<path d="M1250 955H1264M1250 961H1264M1250 967H1264" stroke="#ccc" stroke-width="2"/>

<!-- taskbar -->
<rect y="983" width="1280" height="41" fill="url(#bar)"/>
<g clip-path="url(#tbclip)"><g filter="url(#b8)" opacity=".35"><rect x="630" y="985" width="30" height="36" fill="#4a5a58"/><rect x="690" y="990" width="40" height="34" fill="#405050"/><rect x="780" y="985" width="30" height="38" fill="#3a4a4a"/><rect x="860" y="990" width="40" height="30" fill="#404e4e"/><rect x="960" y="985" width="30" height="38" fill="#36474a"/></g></g>
<rect x="1270" y="985" width="10" height="39" fill="#3c4244"/>
<circle cx="27" cy="1005" r="18" fill="url(#orb)" stroke="#3a5a70"/>
<path d="M17 998 25 996V1004H17Z" fill="#d8452c"/><path d="M27 996 37 997V1004H27Z" fill="#7cb832"/><path d="M17 1006H25V1014L17 1012Z" fill="#2e9ce0"/><path d="M27 1006H37V1013L27 1014Z" fill="#f0b820"/>
<rect x="60.500" y="985.500" width="57" height="37" rx="2" fill="url(#btn)" stroke="#999"/>
<circle cx="89" cy="1005" r="15" fill="#e0493a"/><path d="M89 1005 76 998A15 15 0 0 0 84 1019Z" fill="#3a9a50"/><path d="M89 1005 102 998A15 15 0 0 1 84 1019Z" fill="#f4c430"/><circle cx="89" cy="1005" r="7" fill="#4a8de0" stroke="#fff" stroke-width="2"/>
<path d="M135 993H157L154 1017H139Z" fill="#8aaed0"/><ellipse cx="146" cy="993" rx="11" ry="3" fill="#c8dcec"/><path d="M152 1018 163 1005M163 1000C167 1003 165 1007 161 1006" stroke="#d0d0d0" stroke-width="3.500" fill="none"/>
<rect x="198" y="990" width="30" height="31" rx="3" fill="#141414"/><circle cx="213" cy="1005" r="11" fill="#555" stroke="#b0b0b0" stroke-width="1.500"/><path d="M205 1004A9 9 0 0 1 221 1004Z" fill="#2a2a2a"/><path d="M212 1005 220 999" stroke="#c8501c" stroke-width="1.500"/>
<circle cx="275" cy="1005" r="14" fill="#0fa0e0"/><rect x="262" y="990" width="12" height="12" rx="5" fill="#0fa0e0"/><rect x="277" y="1008" width="12" height="12" rx="5" fill="#0fa0e0"/>
<text x="266" y="1015" style="font-size:26px;font-weight:bold;fill:#fff" textLength="18" lengthAdjust="spacingAndGlyphs">S</text>
<path d="M322 996H334L337 993H352V1020H322Z" fill="#f1dc8e"/><rect x="326" y="991" width="8" height="5" fill="#d8d8d8"/><rect x="336" y="991" width="7" height="4" fill="#d44"/><path d="M326 1008H350V1020H346V1012H330V1020H326Z" fill="#6ab8e0"/>
<circle cx="399" cy="1005" r="15" fill="none" stroke="#0f78d0" stroke-width="3"/><path d="M408 996C396 990 388 1006 396 1015 400 1017 405 1013 406 1010" fill="none" stroke="#0f78d0" stroke-width="3"/><circle cx="407" cy="994" r="7" fill="#d87820"/><path d="M404 997H410" stroke="#fff"/>
<rect x="433.500" y="985.500" width="56" height="37" rx="2" fill="url(#btn)" stroke="#888"/>
<rect x="445" y="990" width="32" height="30" fill="#9a9a9a"/><path d="M452 994 458 991 462 996 458 1002 452 1001Z" fill="#fff" stroke="#222" stroke-width="1.500"/><path d="M466 996C470 1002 468 1014 456 1014 450 1014 448 1012 448 1010" fill="none" stroke="#123a80" stroke-width="2.200"/><circle cx="466" cy="996" r="2" fill="#123a80"/>
<rect x="494.500" y="985.500" width="57" height="37" rx="2" fill="url(#btn)" stroke="#888"/>
<rect x="507" y="988" width="32" height="32" fill="#f3e6d8"/><path d="M523 991 535 1018H528L523 1005 519 1018H511Z" fill="#d87a24"/>
<rect x="556.500" y="985.500" width="53" height="37" rx="2" fill="#8a9094" stroke="#ddd"/>
<rect x="610" y="986" width="3" height="36" fill="#9a9a9a"/>
<rect x="566" y="988" width="32" height="32" fill="#48a4d8"/><path d="M582 991 591 1014H586L582 1005 578 1014H572Z" fill="#0d5fa0"/><rect x="586" y="1012" width="11" height="7" fill="#cfe4f0"/>
<text x="587" y="1018.500" style="font-size:6px;fill:#123">C3D</text>
<text x="1066" y="1006" class="l" textLength="16">RU</text>
<path d="M1098 1007H1106L1102 1003Z" fill="#ddd"/>
<path d="M1121 1002H1125L1129 998V1012L1125 1008H1121Z" fill="#e6e6e6"/><path d="M1132 1002C1133 1004 1133 1006 1132 1008" stroke="#ddd" fill="none"/>
<rect x="1145" y="1001" width="12" height="9" fill="none" stroke="#e6e6e6" stroke-width="1.300"/><rect x="1144" y="998" width="3" height="5" fill="#e6e6e6"/><path d="M1144 1013H1157" stroke="#e6e6e6" stroke-width="1.300"/>
<path d="M1169 998V1013" stroke="#eee" stroke-width="1.500"/><path d="M1170 998H1180L1178 1002 1180 1006H1170Z" fill="#eee"/>
<text x="1216" y="1001" class="l" textLength="22">1:54</text>
<text x="1199" y="1018" class="l" textLength="54">13.05.2017</text>
</svg>
</body></html>
